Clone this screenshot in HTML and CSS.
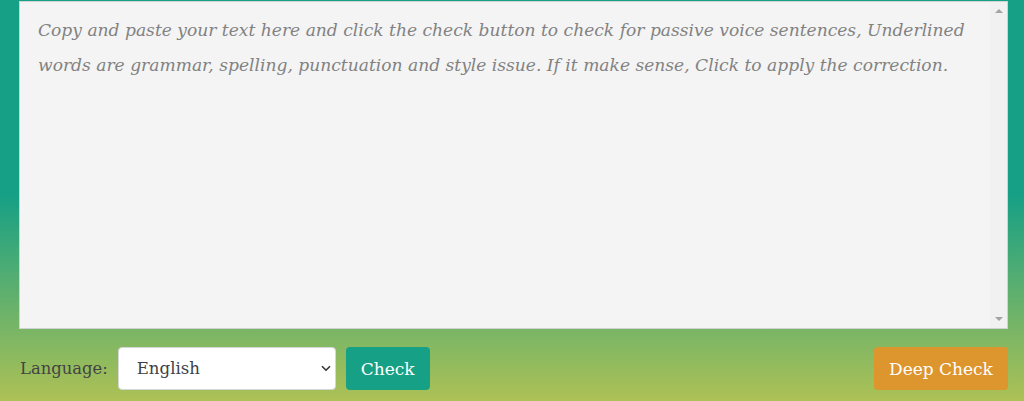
FILE: index.html
```html
<!DOCTYPE html>
<html lang="en">
<head>
<meta charset="utf-8">
<title>Passive Voice Checker</title>
<link rel="stylesheet" href="styles.css">
</head>
<body>
<div class="page">
  <div class="editor-wrap">
    <textarea class="editor" placeholder="Copy and paste your text here and click the check button to check for passive voice sentences, Underlined&#10;words are grammar, spelling, punctuation and style issue. If it make sense, Click to apply the correction."></textarea>
    <div class="scrollbar" aria-hidden="true">
      <span class="arrow up"></span>
      <span class="arrow down"></span>
    </div>
  </div>
  <div class="toolbar">
    <div class="left">
      <label class="lang-label" for="lang">Language:</label>
      <div class="select-wrap">
        <select id="lang" class="lang-select">
          <option>English</option>
        </select>
        <svg class="chev" width="10" height="7" viewBox="0 0 10 7"><path d="M1 1.2 L5 5.2 L9 1.2" fill="none" stroke="#333" stroke-width="1.6"/></svg>
      </div>
      <button class="btn btn-check">Check</button>
    </div>
    <button class="btn btn-deep">Deep Check</button>
  </div>
</div>
</body>
</html>
```
FILE: styles.css
```css
html, body {
  margin: 0;
  padding: 0;
}
body {
  width: 1024px;
  height: 401px;
  overflow: hidden;
  background: linear-gradient(to bottom, #16a085 0, #16a085 195px, #f4d03f 497px);
  font-family: "DejaVu Serif", "Liberation Serif", serif;
}
.page {
  padding: 1px 16px 0 19px;
  display: flex;
  flex-direction: column;
}
.editor-wrap {
  position: relative;
  width: 989px;
  height: 328px;
}
.editor {
  box-sizing: border-box;
  width: 989px;
  height: 328px;
  margin: 0;
  border: 1px solid #cfd4d3;
  background: #f4f4f4;
  padding: 11px 36px 11px 18px;
  font-family: "DejaVu Serif", serif;
  font-style: italic;
  font-size: 17.1px;
  line-height: 35px;
  color: #555;
  resize: none;
  overflow: hidden;
  outline: none;
  display: block;
}
.editor::placeholder {
  color: #828282;
  opacity: 1;
}
.scrollbar {
  position: absolute;
  top: 1px;
  right: 1px;
  bottom: 1px;
  width: 17px;
  background: #f1f1f1;
}
.arrow {
  position: absolute;
  left: 5px;
  width: 0;
  height: 0;
  border-left: 4px solid transparent;
  border-right: 4px solid transparent;
}
.arrow.up {
  top: 7px;
  border-bottom: 4px solid #a3a3a3;
}
.arrow.down {
  bottom: 7px;
  border-top: 4px solid #a3a3a3;
}
.toolbar {
  display: flex;
  justify-content: space-between;
  align-items: center;
  margin-top: 18px;
}
.left {
  display: flex;
  align-items: center;
}
.lang-label {
  font-size: 16.4px;
  color: #444;
  margin-left: 1px;
  margin-right: 10px;
}
.select-wrap {
  position: relative;
}
.lang-select {
  appearance: none;
  -webkit-appearance: none;
  box-sizing: border-box;
  width: 218px;
  height: 43px;
  border: 1px solid #d6d6d6;
  border-radius: 4px;
  background: #fff;
  padding: 0 18px;
  font-family: "DejaVu Serif", serif;
  font-size: 16.6px;
  color: #3d3f4a;
  display: block;
}
.chev {
  position: absolute;
  right: 5px;
  top: 18px;
  pointer-events: none;
}
.btn {
  box-sizing: border-box;
  height: 43px;
  border: none;
  border-radius: 4px;
  color: #fff;
  font-family: "DejaVu Serif", serif;
  font-size: 17px;
  padding: 0;
  cursor: pointer;
}
.btn-check {
  background: #16a085;
  margin-left: 10px;
  width: 84px;
}
.btn-deep {
  background: #dd952e;
  width: 134px;
}
```
